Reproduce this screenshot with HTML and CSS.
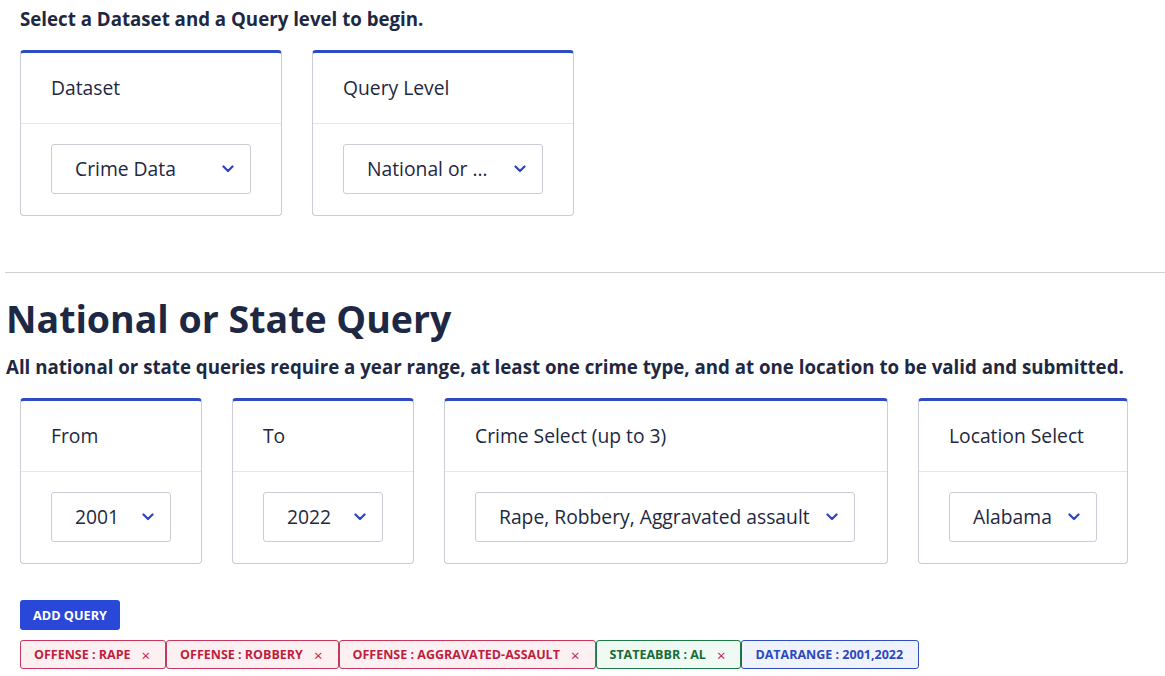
FILE: index.html
```html
<!DOCTYPE html>
<html lang="en">
<head>
<meta charset="utf-8">
<title>Query</title>
<link rel="stylesheet" href="styles.css">
</head>
<body>
<div class="page">
  <section class="intro">
    <p class="lead">Select a Dataset and a Query level to begin.</p>
    <div class="row">
      <div class="card">
        <div class="card-head">Dataset</div>
        <div class="card-body">
          <div class="select fixed"><span class="val">Crime Data</span><svg class="chev" viewBox="0 0 12 8" width="12" height="8"><path d="M1.5 1.5 L6 6 L10.5 1.5" fill="none" stroke="currentColor" stroke-width="2.2" stroke-linecap="round" stroke-linejoin="round"/></svg></div>
        </div>
      </div>
      <div class="card">
        <div class="card-head">Query Level</div>
        <div class="card-body">
          <div class="select fixed"><span class="val">National or State Query</span><svg class="chev" viewBox="0 0 12 8" width="12" height="8"><path d="M1.5 1.5 L6 6 L10.5 1.5" fill="none" stroke="currentColor" stroke-width="2.2" stroke-linecap="round" stroke-linejoin="round"/></svg></div>
        </div>
      </div>
    </div>
  </section>
  <hr class="divider">
  <section class="query">
    <h1 class="title">National or State Query</h1>
    <p class="desc">All national or state queries require a year range, at least one crime type, and at one location to be valid and submitted.</p>
    <div class="row">
      <div class="card w-from">
        <div class="card-head">From</div>
        <div class="card-body">
          <div class="select"><span class="val">2001</span><svg class="chev" viewBox="0 0 12 8" width="12" height="8"><path d="M1.5 1.5 L6 6 L10.5 1.5" fill="none" stroke="currentColor" stroke-width="2.2" stroke-linecap="round" stroke-linejoin="round"/></svg></div>
        </div>
      </div>
      <div class="card w-to">
        <div class="card-head">To</div>
        <div class="card-body">
          <div class="select"><span class="val">2022</span><svg class="chev" viewBox="0 0 12 8" width="12" height="8"><path d="M1.5 1.5 L6 6 L10.5 1.5" fill="none" stroke="currentColor" stroke-width="2.2" stroke-linecap="round" stroke-linejoin="round"/></svg></div>
        </div>
      </div>
      <div class="card w-crime">
        <div class="card-head">Crime Select (up to 3)</div>
        <div class="card-body">
          <div class="select"><span class="val">Rape, Robbery, Aggravated assault</span><svg class="chev" viewBox="0 0 12 8" width="12" height="8"><path d="M1.5 1.5 L6 6 L10.5 1.5" fill="none" stroke="currentColor" stroke-width="2.2" stroke-linecap="round" stroke-linejoin="round"/></svg></div>
        </div>
      </div>
      <div class="card w-loc">
        <div class="card-head">Location Select</div>
        <div class="card-body">
          <div class="select"><span class="val">Alabama</span><svg class="chev" viewBox="0 0 12 8" width="12" height="8"><path d="M1.5 1.5 L6 6 L10.5 1.5" fill="none" stroke="currentColor" stroke-width="2.2" stroke-linecap="round" stroke-linejoin="round"/></svg></div>
        </div>
      </div>
    </div>
    <div class="actions">
      <button class="btn">ADD QUERY</button>
    </div>
    <div class="tags">
      <span class="tag red">OFFENSE : RAPE <span class="x">×</span></span>
      <span class="tag red">OFFENSE : ROBBERY <span class="x">×</span></span>
      <span class="tag red">OFFENSE : AGGRAVATED-ASSAULT <span class="x">×</span></span>
      <span class="tag green">STATEABBR : AL <span class="x">×</span></span>
      <span class="tag blue">DATARANGE : 2001,2022</span>
    </div>
  </section>
</div>
</body>
</html>
```
FILE: styles.css
```css
* { box-sizing: border-box; }
html, body { margin: 0; padding: 0; background: #fff; }
body {
  font-family: "Open Sans", "Noto Sans", sans-serif;
  color: #1e2842;
}
.page { padding: 0 0 0 5px; }
.intro { padding-left: 15px; }
.lead {
  margin: 0;
  padding-top: 7px;
  font-size: 18.7px;
  font-weight: 700;
  line-height: 24px;
}
.row {
  display: flex;
  gap: 30px;
  align-items: flex-start;
}
.intro .row { margin-top: 19px; }
.card {
  border: 1px solid #cbcdd6;
  border-top: 3px solid #2d4cc2;
  border-radius: 4px;
  background: #fff;
  width: 262px;
}
.card-head {
  padding: 20px 30px;
  font-size: 19.3px;
  line-height: 30px;
  border-bottom: 1px solid #e6e7ec;
}
.card-body { padding: 20px 30px 21px; }
.select {
  display: inline-flex;
  align-items: center;
  justify-content: space-between;
  min-width: 120px;
  height: 50px;
  padding: 0 16px 0 23px;
  border: 1px solid #cbcdd6;
  border-radius: 3px;
  font-size: 19.3px;
  gap: 16px;
  white-space: nowrap;
}
.select .val { margin-bottom: 2px; }
.select.fixed { width: 200px; }
.select.fixed .val { overflow: hidden; text-overflow: ellipsis; flex: 1; }
.chev { color: #2d44c0; flex: none; }
.divider {
  margin: 56px 0 0;
  border: 0;
  border-top: 1px solid #cfd0d4;
}
.title {
  margin: 21px 0 0 1px;
  font-size: 37.5px;
  font-weight: 700;
  line-height: 50px;
}
.desc {
  margin: 11px 0 0 1px;
  font-size: 18.7px;
  font-weight: 700;
  line-height: 24px;
}
.query .row { margin-top: 19px; padding-left: 15px; }
.w-from, .w-to { width: 182px; }
.w-crime { width: 444px; }
.w-loc { width: 210px; }
.actions { padding-left: 15px; margin-top: 36px; }
.btn {
  font-family: inherit;
  background: #2a48d8;
  color: #fff;
  border: 0;
  border-radius: 3px;
  height: 30px;
  width: 100px;
  font-size: 12.7px;
  font-weight: 700;
  padding: 0;
  cursor: pointer;
}
.tags {
  display: flex;
  padding-left: 15px;
  margin-top: 10px;
}
.tag {
  display: inline-flex;
  align-items: center;
  height: 29px;
  padding: 0 15px 0 13px;
  border: 1px solid;
  border-radius: 3px;
  font-size: 12.5px;
  font-weight: 700;
  gap: 11px;
}
.tag .x { font-weight: 400; font-size: 15px; color: #c8203f; }
.red { background: #fdf0f3; border-color: #c9375b; color: #c01d3d; }
.green { background: #eefaf3; border-color: #1f7a47; color: #176b37; }
.blue { background: #eff3fd; border-color: #2f4cc0; color: #2d47c0; }
```
